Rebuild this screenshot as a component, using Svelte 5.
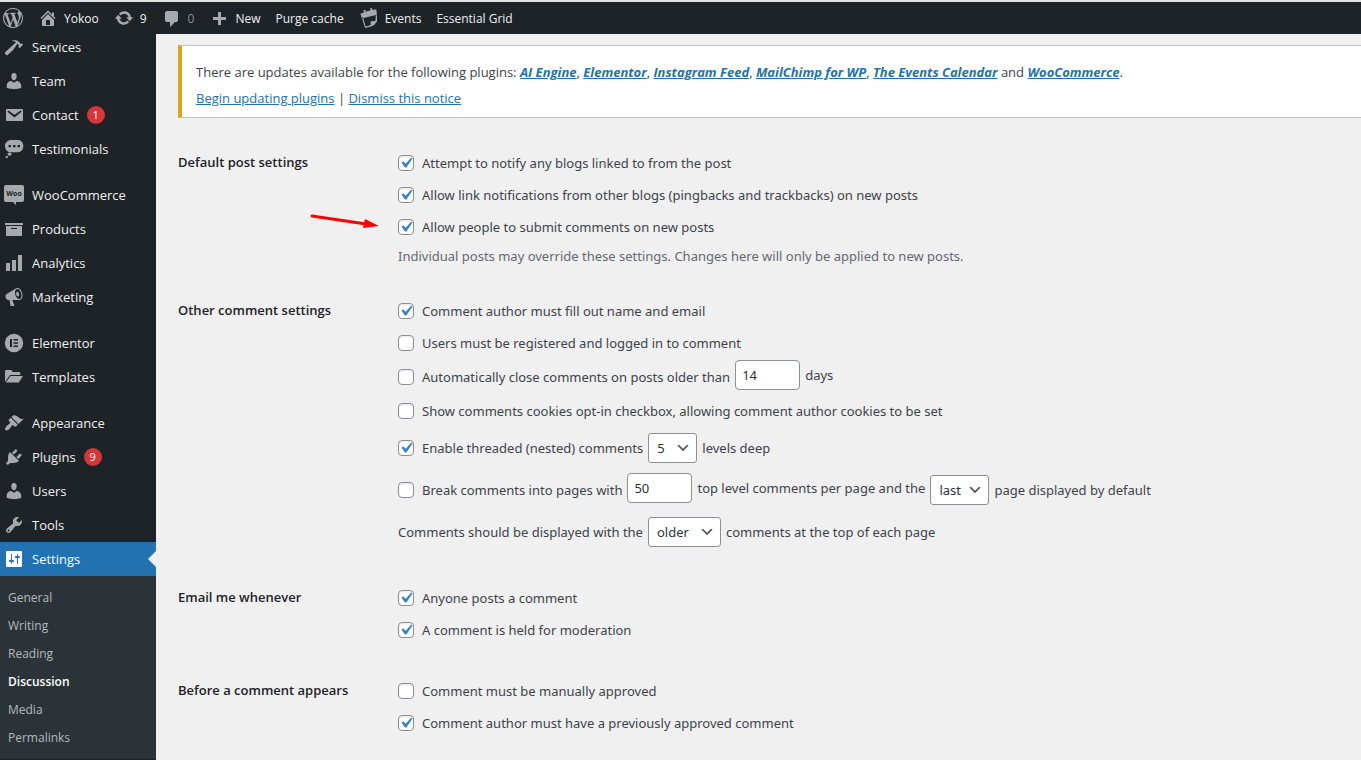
<script>
	const icons = {
		wordpress: 'M20 10c0-5.51-4.49-10-10-10C4.48 0 0 4.49 0 10c0 5.52 4.48 10 10 10 5.51 0 10-4.48 10-10zM7.78 15.37L4.37 6.22c.55-.02 1.17-.08 1.17-.08.5-.06.44-1.13-.06-1.11 0 0-1.45.11-2.37.11-.18 0-.37 0-.58-.01C4.12 2.69 6.87 1.11 10 1.11c2.33 0 4.45.87 6.05 2.34-.68-.11-1.65.39-1.65 1.58 0 .74.45 1.36.9 2.1.35.61.55 1.36.55 2.46 0 1.49-1.4 5-1.4 5l-3.03-8.37c.54-.02.82-.17.82-.17.5-.05.44-1.25-.06-1.22 0 0-1.44.12-2.38.12-.87 0-2.33-.12-2.33-.12-.5-.03-.56 1.2-.06 1.22l.92.08 1.26 3.41zM17.41 10c.24-.64.74-1.87.43-4.25.7 1.29 1.05 2.71 1.05 4.25 0 3.29-1.73 6.24-4.4 7.78.97-2.59 1.94-5.2 2.92-7.78zM6.1 18.09C3.12 16.65 1.11 13.53 1.11 10c0-1.3.23-2.48.72-3.59C3.25 10.3 4.67 14.2 6.1 18.09zm4.03-6.63l2.58 6.98c-.86.29-1.76.45-2.71.45-.79 0-1.57-.11-2.29-.33.81-2.38 1.62-4.74 2.42-7.1z',
		home: 'M16 8.5l1.53 1.53-1.06 1.06L10 4.6l-6.47 6.49-1.06-1.06L10 2.5l4 4v-2h2v4zm-6-2.46l6 5.99V18H4v-5.97zM12 17v-5H8v5h4z',
		update: 'M10.2 3.28c3.53 0 6.43 2.61 6.92 6h2.08l-3.5 4-3.5-4h2.32c-.45-1.97-2.21-3.45-4.32-3.45-1.45 0-2.73.71-3.54 1.78L4.95 5.66C6.23 4.2 8.11 3.28 10.2 3.28zm-.4 13.44c-3.52 0-6.43-2.61-6.92-6H.8l3.5-4c1.17 1.33 2.33 2.67 3.5 4H5.48c.45 1.97 2.21 3.45 4.32 3.45 1.45 0 2.73-.71 3.54-1.78l1.71 1.95c-1.28 1.46-3.15 2.38-5.25 2.38z',
		comment: 'M5 3h9q.82 0 1.41.59T16 5v7q0 .82-.59 1.41T14 14h-1l-5 5v-5H5q-.82 0-1.41-.59T3 12V5q0-.82.59-1.41T5 3z',
		plus: 'M17 9v3h-5v5H9v-5H4V9h5V4h3v5z',
		events: 'M1.5 5.5L5 4.4 4.4 2.3 6.3 1.7 6.9 3.8 11.6 2.3 11 .4 12.9 0 13.6 1.9 17.2 1.3 18 6.8 2.8 10.4zM2.8 9.5L4 9.200 6.700 18.600 11.500 17.300C12.100 16.200 11 14.500 11.900 13.600 13.300 12.500 15 13.800 16.500 12.600L16.800 7.400 18 7.200 18 13.400C16.200 16 14.300 18 11.500 18.800L6 20z',
		hammer: 'M17.7 6.32l1.41 1.42-3.47 3.41-1.42-1.42.84-.82c-.32-.76-.81-1.57-1.51-2.31l-4.61 6.59-5.26 4.7c-.39.39-1.02.39-1.42 0l-1.2-1.21c-.39-.39-.39-1.02 0-1.41l10.97-9.92c-1.37-.86-3.21-1.46-5.67-1.48 2.7-.82 4.95-.93 6.58-.3 1.7.66 2.82 2.2 3.91 3.58z',
		user: 'M10 9.25c-2.27 0-2.73-3.44-2.73-3.44C7 4.02 7.82 2 9.97 2c2.16 0 2.98 2.02 2.71 3.81 0 0-.41 3.44-2.68 3.44zm0 2.57L12.72 10c2.39 0 4.52 2.33 4.52 4.53v2.49s-3.65 1.13-7.24 1.13c-3.65 0-7.24-1.13-7.24-1.13v-2.49c0-2.25 1.94-4.48 4.47-4.48z',
		email: 'M3 4h15c.6 0 1 .4 1 1v10c0 .6-.4 1-1 1H3c-.6 0-1-.4-1-1V5c0-.6.4-1 1-1zm7.49 8.6l6.74-5.53c.24-.2.43-.66.13-1.07-.29-.41-.82-.42-1.17-.17l-5.7 3.86L4.8 5.83c-.35-.25-.88-.24-1.17.17-.3.41-.11.87.13 1.07z',
		testimonial: 'M7 1h7c3 0 5.300 2.500 5.300 6s-2.300 6.200-5.300 6.200H6.500C3.500 13.200 1 10.500 1 7s3-6 6-6zM4.500 6v2.200h2.500V6zm4.500 0v2.200h2.500V6zm4.500 0v2.200H16V6zM5.500 13.500a2 1.600 0 1 0 .1 0zM2.700 16.800a1.200 1.200 0 1 0 .1 0z',
		archive: 'M19 4v2H1V4h18zM2 7h16v10H2V7zm11 3V9H7v1h6z',
		chart: 'M18 18V2h-4v16h4zm-6 0V7H8v11h4zm-6 0v-8H2v8h4z',
		megaphone: 'M18.15 5.94c.46 1.62.38 3.22-.02 4.48-.42 1.28-1.26 2.18-2.3 2.48-.16.06-.26.06-.4.06-.06.02-.12.02-.18.02-.06.02-.14.02-.22.02h-6.8l2.22 5.5c.02.14-.06.26-.14.34-.08.1-.24.16-.34.16H6.95c-.1 0-.26-.06-.34-.16-.08-.08-.16-.2-.14-.34l-1-5.5H4.25l-.02-.02c-.5.06-1.08-.18-1.54-.62s-.88-1.08-1.06-1.88c-.24-.8-.2-1.56-.02-2.2.18-.62.58-1.08 1.06-1.3l.02-.02 9-5.4c.1-.06.18-.1.24-.16.06-.04.14-.08.24-.12.16-.08.28-.12.5-.18 1.04-.3 2.24.1 3.22.98s1.84 2.24 2.26 3.86zm-2.58 5.98h-.02c.4-.1.74-.34 1.04-.7.58-.7.86-1.76.86-3.04 0-.64-.1-1.3-.28-1.98-.34-1.36-1.02-2.5-1.78-3.24s-1.68-1.1-2.46-.88c-.82.22-1.4.96-1.7 2-.32 1.04-.28 2.36.06 3.72.38 1.36 1 2.5 1.8 3.24.78.74 1.62 1.1 2.48.88zm-2.54-7.08c.22-.04.42-.02.62.04.38.16.76.48 1.02 1s.42 1.2.42 1.78c0 .3-.04.56-.12.8-.18.48-.44.84-.86.94-.34.1-.8-.06-1.14-.4s-.64-.86-.78-1.5c-.18-.62-.12-1.24.02-1.72s.48-.84.82-.94z',
		elementor: 'M10 .8a9.200 9.200 0 1 0 0 18.400A9.200 9.200 0 1 0 10 .8zM6 6h2v8H6zm3.500 0H14v1.600H9.500zm0 3.200H14v1.600H9.500zm0 3.200H14V14H9.500z',
		folder: 'M1 15V4.500C1 3.700 1.500 3 2.300 3H7c1 0 1 2 2 2h6c.8 0 1.300.5 1.300 1.300V8H6zM6.500 9H19l-4.200 6.400H1.800z',
		appearance: 'M14.48 11.06L7.41 3.99l1.5-1.5c.5-.56 2.3-.47 3.51.32 1.21.8 1.43 1.28 2.91 2.1 1.18.64 2.45 1.26 4.45.85zm-.71.71L6.7 4.7 4.93 6.47c-.39.39-.39 1.02 0 1.41l1.06 1.06c.39.39.39 1.03 0 1.42-.6.6-1.43 1.11-2.21 1.69-.35.26-.7.53-1.01.84C1.43 14.23.4 16.08 1.4 17.07c.99 1 2.84-.03 4.18-1.36.31-.31.58-.66.85-1.02.57-.78 1.08-1.61 1.69-2.21.39-.39 1.02-.39 1.41 0l1.06 1.06c.39.39 1.02.39 1.41 0z',
		plugins: 'M13.11 4.36L9.87 7.6 8 5.73l3.24-3.24c.35-.34 1.05-.2 1.56.32.52.51.66 1.21.31 1.55zm-8 1.77l.91-1.12 9.01 9.01-1.19.84c-.71.71-2.63 1.16-3.82 1.16H6.14L4.9 17.26c-.59.59-1.54.59-2.12 0-.59-.58-.59-1.53 0-2.12l1.24-1.24v-3.88c0-1.13.4-3.19 1.09-3.89zm7.26 3.97l3.24-3.24c.34-.35 1.04-.21 1.55.31.52.51.66 1.21.31 1.55l-3.24 3.25z',
		tools: 'M16.68 9.77c-1.34 1.34-3.3 1.67-4.95.99l-5.41 6.52c-.99.99-2.59.99-3.58 0s-.99-2.59 0-3.57l6.52-5.42c-.68-1.65-.35-3.61.99-4.95 1.28-1.28 3.12-1.62 4.72-1.06l-2.89 2.89 2.82 2.82 2.86-2.87c.53 1.58.18 3.39-1.08 4.65zM3.81 16.21c.4.39 1.04.39 1.43 0 .4-.4.4-1.04 0-1.43-.39-.4-1.03-.4-1.43 0-.39.39-.39 1.03 0 1.43z',
		settings: 'M18 17V3c0-.55-.45-1-1-1H3c-.55 0-1 .45-1 1v14c0 .55.45 1 1 1h14c.55 0 1-.45 1-1zM8 11h1c.55 0 1 .45 1 1s-.45 1-1 1H8v1.5c0 .28-.22.5-.5.5s-.5-.22-.5-.5V13H6c-.55 0-1-.45-1-1s.45-1 1-1h1V5.5c0-.28.22-.5.5-.5s.5.22.5.5V11zm5-2h-1c-.55 0-1-.45-1-1s.45-1 1-1h1V5.5c0-.28.22-.5.5-.5s.5.22.5.5V7h1c.55 0 1 .45 1 1s-.45 1-1 1h-1v5.5c0 .28-.22.5-.5.5s-.5-.22-.5-.5V9z'
	};

	const toolbar = [
		{ icon: 'wordpress', name: 'About WordPress' },
		{ icon: 'home', label: 'Yokoo' },
		{ icon: 'update', label: '9' },
		{ icon: 'comment', label: '0', dim: true },
		{ icon: 'plus', label: 'New' },
		{ label: 'Purge cache' },
		{ icon: 'events', label: 'Events' },
		{ label: 'Essential Grid' }
	];

	const menu = [
		[
			{ icon: 'hammer', label: 'Services' },
			{ icon: 'user', label: 'Team' },
			{ icon: 'email', label: 'Contact', count: 1 },
			{ icon: 'testimonial', label: 'Testimonials' }
		],
		[
			{ icon: 'woo', label: 'WooCommerce' },
			{ icon: 'archive', label: 'Products' },
			{ icon: 'chart', label: 'Analytics' },
			{ icon: 'megaphone', label: 'Marketing' }
		],
		[
			{ icon: 'elementor', label: 'Elementor' },
			{ icon: 'folder', label: 'Templates' }
		],
		[
			{ icon: 'appearance', label: 'Appearance' },
			{ icon: 'plugins', label: 'Plugins', count: 9 },
			{ icon: 'user', label: 'Users' },
			{ icon: 'tools', label: 'Tools' },
			{ icon: 'settings', label: 'Settings', current: true }
		]
	];

	const submenu = ['General', 'Writing', 'Reading', 'Discussion', 'Media', 'Permalinks'];
	const plugins = ['AI Engine', 'Elementor', 'Instagram Feed', 'MailChimp for WP', 'The Events Calendar', 'WooCommerce'];
	const depths = [2, 3, 4, 5, 6, 7, 8, 9, 10];

	let options = $state({
		pingback: true,
		trackback: true,
		comments: true,
		nameEmail: true,
		registration: false,
		autoClose: false,
		closeDays: 14,
		cookies: false,
		threaded: true,
		depth: 5,
		paged: false,
		perPage: 50,
		defaultPage: 'last',
		order: 'older',
		notifyPost: true,
		notifyModeration: true,
		manual: false,
		previous: true
	});
</script>

{#snippet icon(name)}
	<svg class="icon" viewBox="0 0 20 20" aria-hidden="true">
		{#if name === 'woo'}
			<path d="M2 0h16c1.300 0 2 .8 2 2v13c0 1.300-.8 2-2 2h-6v3l-3-3H2c-1.300 0-2-.8-2-2V2C0 .8.8 0 2 0z" />
			<text x="10" y="11" text-anchor="middle">Woo</text>
		{:else}
			<path fill-rule="evenodd" d={icons[name]} />
		{/if}
	</svg>
{/snippet}

{#snippet check(key, label)}
	<label class="check">
		<input type="checkbox" bind:checked={options[key]} />
		{label}
	</label>
{/snippet}

<div class="page">
	<header class="toolbar">
		{#each toolbar as item}
			<a href="#top" class:dim={item.dim} aria-label={item.name}>
				{#if item.icon}{@render icon(item.icon)}{/if}
				{#if item.label}<span>{item.label}</span>{/if}
			</a>
		{/each}
	</header>

	<div class="body">
		<nav class="sidebar" aria-label="Main menu">
			{#each menu as group}
				<ul class="group">
					{#each group as item}
						<li>
							<a href="#menu" class:current={item.current}>
								{@render icon(item.icon)}
								<span>{item.label}</span>
								{#if item.count}<span class="count">{item.count}</span>{/if}
							</a>
						</li>
					{/each}
				</ul>
			{/each}
			<ul class="submenu">
				{#each submenu as item}
					<li><a href="#settings" class:active={item === 'Discussion'}>{item}</a></li>
				{/each}
			</ul>
		</nav>

		<main>
			<div class="notice">
				<p>
					There are updates available for the following plugins:
					{#each plugins as plugin, i}{#if i === plugins.length - 1}{' and '}{:else if i > 0}{', '}{/if}<a href="#plugin"><em>{plugin}</em></a>{/each}.
				</p>
				<p><a href="#update">Begin updating plugins</a> | <a href="#dismiss">Dismiss this notice</a></p>
			</div>

			<form>
				<section>
					<h2>Default post settings</h2>
					<div class="fields">
						<div class="row">{@render check('pingback', 'Attempt to notify any blogs linked to from the post')}</div>
						<div class="row">{@render check('trackback', 'Allow link notifications from other blogs (pingbacks and trackbacks) on new posts')}</div>
						<div class="row">
							{@render check('comments', 'Allow people to submit comments on new posts')}
							<svg class="arrow" viewBox="0 0 70 18" aria-hidden="true">
								<path d="M2 3L56 11" />
								<polygon points="55,6 69,13 53,15" />
							</svg>
						</div>
						<p class="description">Individual posts may override these settings. Changes here will only be applied to new posts.</p>
					</div>
				</section>

				<section>
					<h2>Other comment settings</h2>
					<div class="fields">
						<div class="row">{@render check('nameEmail', 'Comment author must fill out name and email')}</div>
						<div class="row">{@render check('registration', 'Users must be registered and logged in to comment')}</div>
						<div class="row number">
							<div class="low">{@render check('autoClose', 'Automatically close comments on posts older than')}</div>
							<input id="close-days" type="number" bind:value={options.closeDays} />
							<label for="close-days">days</label>
						</div>
						<div class="row">{@render check('cookies', 'Show comments cookies opt-in checkbox, allowing comment author cookies to be set')}</div>
						<div class="row tall">
							{@render check('threaded', 'Enable threaded (nested) comments')}
							<select id="depth" bind:value={options.depth}>
								{#each depths as depth}
									<option value={depth}>{depth}</option>
								{/each}
							</select>
							<label for="depth">levels deep</label>
						</div>
						<div class="row tall number">
							<div class="low">{@render check('paged', 'Break comments into pages with')}</div>
							<input id="per-page" type="number" bind:value={options.perPage} />
							<label for="per-page">top level comments per page and the</label>
							<select id="default-page" class="low" bind:value={options.defaultPage}>
								<option>last</option>
								<option>first</option>
							</select>
							<label for="default-page" class="low">page displayed by default</label>
						</div>
						<div class="row tall">
							<label for="order">Comments should be displayed with the</label>
							<select id="order" bind:value={options.order} aria-describedby="order-note">
								<option>older</option>
								<option>newer</option>
							</select>
							<span id="order-note">comments at the top of each page</span>
						</div>
					</div>
				</section>

				<section>
					<h2>Email me whenever</h2>
					<div class="fields">
						<div class="row">{@render check('notifyPost', 'Anyone posts a comment')}</div>
						<div class="row">{@render check('notifyModeration', 'A comment is held for moderation')}</div>
					</div>
				</section>

				<section>
					<h2>Before a comment appears</h2>
					<div class="fields">
						<div class="row">{@render check('manual', 'Comment must be manually approved')}</div>
						<div class="row">{@render check('previous', 'Comment author must have a previously approved comment')}</div>
					</div>
				</section>
			</form>
		</main>
	</div>
</div>

<style>
	:global(body) {
		background: #f0f0f1;
	}

	.page {
		display: flex;
		flex-direction: column;
		box-sizing: border-box;
		min-height: 100vh;
		border-top: 2px solid #dfe3e3;
		border-bottom: 1px solid #3c434a;
		font-family: "Segoe UI", "Open Sans", sans-serif;
		font-size: 13px;
		color: #3c434a;
	}

	ul {
		list-style: none;
		margin: 0;
		padding: 0;
	}

	.icon {
		width: 20px;
		height: 20px;
		flex-shrink: 0;
		fill: #a7aaad;
	}

	.icon text {
		fill: #1d2327;
		font-size: 7px;
		font-weight: 700;
	}

	.toolbar {
		display: flex;
		align-items: center;
		gap: 15px;
		height: 32px;
		padding-left: 3px;
		background: #1d2327;
		font-size: 12px;
	}

	.toolbar a {
		display: flex;
		align-items: center;
		gap: 6px;
		color: #f0f0f1;
		text-decoration: none;
	}

	.toolbar .dim {
		color: #8c8f94;
	}

	.body {
		display: flex;
		flex: 1;
	}

	.sidebar {
		width: 156px;
		flex-shrink: 0;
		background: #1d2327;
	}

	.group + .group {
		margin-top: 12px;
	}

	.group:first-child {
		margin-top: -4px;
	}

	.group a {
		display: flex;
		align-items: center;
		gap: 8px;
		height: 34px;
		padding-left: 4px;
		color: #f0f0f1;
		text-decoration: none;
	}

	.group .current {
		position: relative;
		background: #2271b1;
		color: #fff;
	}

	.current .icon {
		fill: #fff;
	}

	.current::after {
		content: "";
		position: absolute;
		right: 0;
		border: 8px solid transparent;
		border-right-color: #f0f0f1;
	}

	.count {
		width: 18px;
		border-radius: 9px;
		background: #d63638;
		color: #fff;
		font-size: 11px;
		line-height: 18px;
		text-align: center;
	}

	.submenu {
		padding: 8px 0 7px;
		background: #2c3338;
		font-size: 12px;
	}

	.submenu a {
		display: block;
		padding-left: 8px;
		line-height: 28px;
		color: #b4b9be;
		text-decoration: none;
	}

	.submenu .active {
		color: #fff;
		font-weight: 600;
	}

	main {
		flex: 1;
		min-width: 0;
		padding: 11px 0 0 22px;
	}

	.notice {
		padding: 13px 14px 6px;
		border: 1px solid #c3c4c7;
		border-left: 4px solid #dba617;
		border-right: 0;
		background: #fff;
	}

	.notice p {
		margin: 0;
		line-height: 26px;
	}

	.notice a {
		color: #2271b1;
	}

	.notice em {
		font-weight: 700;
	}

	form {
		padding-top: 29px;
	}

	section {
		display: flex;
		margin-bottom: 29px;
	}

	h2 {
		width: 220px;
		flex-shrink: 0;
		margin: 0;
		color: #1d2327;
		font-size: 13px;
		font-weight: 600;
		line-height: 30px;
	}

	.fields {
		flex: 1;
		min-width: 0;
		font-family: "Segoe UI", "Noto Sans", sans-serif;
	}

	.row {
		display: flex;
		position: relative;
		align-items: center;
		gap: 5px;
		min-height: 32px;
	}

	.row.tall {
		min-height: 42px;
	}

	.row.number {
		padding-bottom: 4px;
	}

	.row.tall.number {
		min-height: 38px;
	}

	.low {
		margin-top: 4px;
	}

	.check {
		display: flex;
		align-items: center;
		gap: 8px;
	}

	.description {
		margin: 3px 0 0;
		color: #646970;
		line-height: 20px;
	}

	input,
	select {
		box-sizing: border-box;
		height: 30px;
		border: 1px solid #8c8f94;
		border-radius: 4px;
		background: #fff;
		color: #2c3338;
		font-family: inherit;
		font-size: 13px;
	}

	input[type="checkbox"] {
		appearance: none;
		width: 16px;
		height: 16px;
		margin: 0;
		box-shadow: inset 0 1px 2px rgba(0, 0, 0, 0.1);
	}

	input[type="checkbox"]:checked {
		background: #fff url("data:image/svg+xml,%3Csvg xmlns='http://www.w3.org/2000/svg' viewBox='0 0 20 20'%3E%3Cpath d='M14.83 4.89l1.34.94-5.81 8.38H9.02L5.78 9.67l1.34-1.25 2.57 2.4z' fill='%233582c4'/%3E%3C/svg%3E") center / 21px no-repeat;
	}

	input[type="number"] {
		appearance: textfield;
		width: 65px;
		margin: 0;
		padding: 0 6px;
	}

	select {
		appearance: none;
		margin: 0;
		padding: 0 24px 0 8px;
		border-radius: 3px;
		background: #fff url("data:image/svg+xml,%3Csvg xmlns='http://www.w3.org/2000/svg' viewBox='0 0 20 20'%3E%3Cpath d='M5 6l5 5 5-5 2 1-7 7-7-7 2-1z' fill='%23555'/%3E%3C/svg%3E") right 5px center / 16px no-repeat;
	}

	/* Marks the comment switch from the empty space left of it */
	.arrow {
		position: absolute;
		right: 100%;
		width: 70px;
		height: 18px;
		margin-right: 18px;
		bottom: 12px;
		fill: #fe0000;
	}

	.arrow path {
		stroke: #fe0000;
		stroke-width: 3;
		stroke-linecap: round;
	}
</style>
